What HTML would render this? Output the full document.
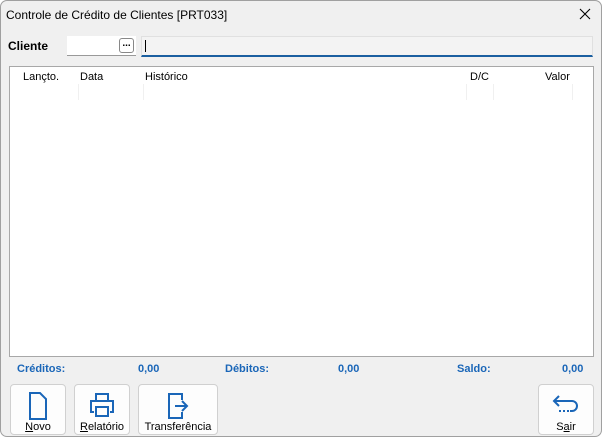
<!DOCTYPE html>
<html><head><style>
*{box-sizing:border-box;margin:0;padding:0}
body{width:602px;height:437px;background:#fff;font-family:"Liberation Sans",sans-serif;font-size:11px;color:#000;overflow:hidden;position:relative}
.win{position:absolute;left:0;top:0;width:602px;height:437px;background:#f0f0f0;box-shadow:inset 0 0 0 1px #a0a0a0;border-radius:7px}
.a{position:absolute}
.hd{position:absolute;top:71px;font-size:11px}
.sep{position:absolute;top:84px;width:1px;height:16px;background:#f0f0f0}
.ft{position:absolute;top:363px;color:#1a66b8;font-weight:bold;font-size:11px}
.btn{position:absolute;top:384px;height:51px;background:#fdfdfd;border:1px solid #d0d0d0;border-radius:4px;text-align:center;font-size:11px}
.btn span{position:absolute;left:0;right:0;bottom:1px}
.btn svg{position:absolute;left:50%;top:7px;transform:translateX(-50%)}
</style></head><body>
<div class="win">
<div class="a" style="left:6px;top:8px;font-size:12px">Controle de Crédito de Clientes [PRT033]</div>
<svg class="a" style="left:579px;top:8px" width="12" height="12" viewBox="0 0 12 12"><path d="M1 1l10 10M11 1L1 11" stroke="#000" stroke-width="1.1"/></svg>
<div class="a" style="left:8px;top:39px;font-weight:bold;font-size:12px">Cliente</div>
<div class="a" style="left:67px;top:36px;width:69px;height:20px;background:#fff;border-bottom:1px solid #999"></div>
<div class="a" style="left:119px;top:38px;width:15px;height:15px;border:1px solid #888;border-radius:3px;background:#fff;font-size:10px;font-weight:bold;line-height:9px;text-align:center">...</div>
<div class="a" style="left:141px;top:36px;width:452px;height:21px;background:#f3f3f3;border:1px solid #e0e0e0;border-bottom:2px solid #1b5fa0"></div>
<div class="a" style="left:145px;top:40px;width:1px;height:12px;background:#000"></div>
<div class="a" style="left:9px;top:66px;width:585px;height:291px;background:#fff;border:1px solid #a8a8a8"></div>
<div class="hd" style="left:23px">Lançto.</div>
<div class="hd" style="left:80px">Data</div>
<div class="hd" style="left:145px">Histórico</div>
<div class="hd" style="left:470px">D/C</div>
<div class="hd" style="left:545px">Valor</div>
<div class="sep" style="left:78px"></div><div class="sep" style="left:143px"></div><div class="sep" style="left:466px"></div><div class="sep" style="left:493px"></div><div class="sep" style="left:572px"></div>
<div class="ft" style="left:17px">Créditos:</div>
<div class="ft" style="left:138px">0,00</div>
<div class="ft" style="left:225px">Débitos:</div>
<div class="ft" style="left:338px">0,00</div>
<div class="ft" style="left:457px">Saldo:</div>
<div class="ft" style="left:562px">0,00</div>
<div class="btn" style="left:10px;width:56px"><svg width="20" height="28" viewBox="0 0 20 28"><path d="M2 1h10l6 6v20H2z" fill="none" stroke="#1a66b8" stroke-width="2"/></svg><span><u>N</u>ovo</span></div>
<div class="btn" style="left:74px;width:56px"><svg width="26" height="26" viewBox="0 0 26 26"><path d="M7 8V2h12v6M5 20H2V9h22v11h-3M7 15h12v9H7z" fill="none" stroke="#1a66b8" stroke-width="2"/></svg><span><u>R</u>elatório</span></div>
<div class="btn" style="left:138px;width:80px"><svg width="22" height="28" viewBox="0 0 22 28"><path d="M15 8V2H2v24h13v-6M8 14h12M15 9l5 5-5 5" fill="none" stroke="#1a66b8" stroke-width="2"/></svg><span>Transferência</span></div>
<div class="btn" style="left:538px;width:56px"><svg width="30" height="26" viewBox="0 0 30 26"><path d="M8 4L3 9l5 5M3 9h18a5 5 0 0 1 0 10h-2" fill="none" stroke="#1a66b8" stroke-width="2"/><path d="M8 19h10" stroke="#1a66b8" stroke-width="2" stroke-dasharray="2 2"/></svg><span>S<u>a</u>ir</span></div>
</div>
</body></html>
